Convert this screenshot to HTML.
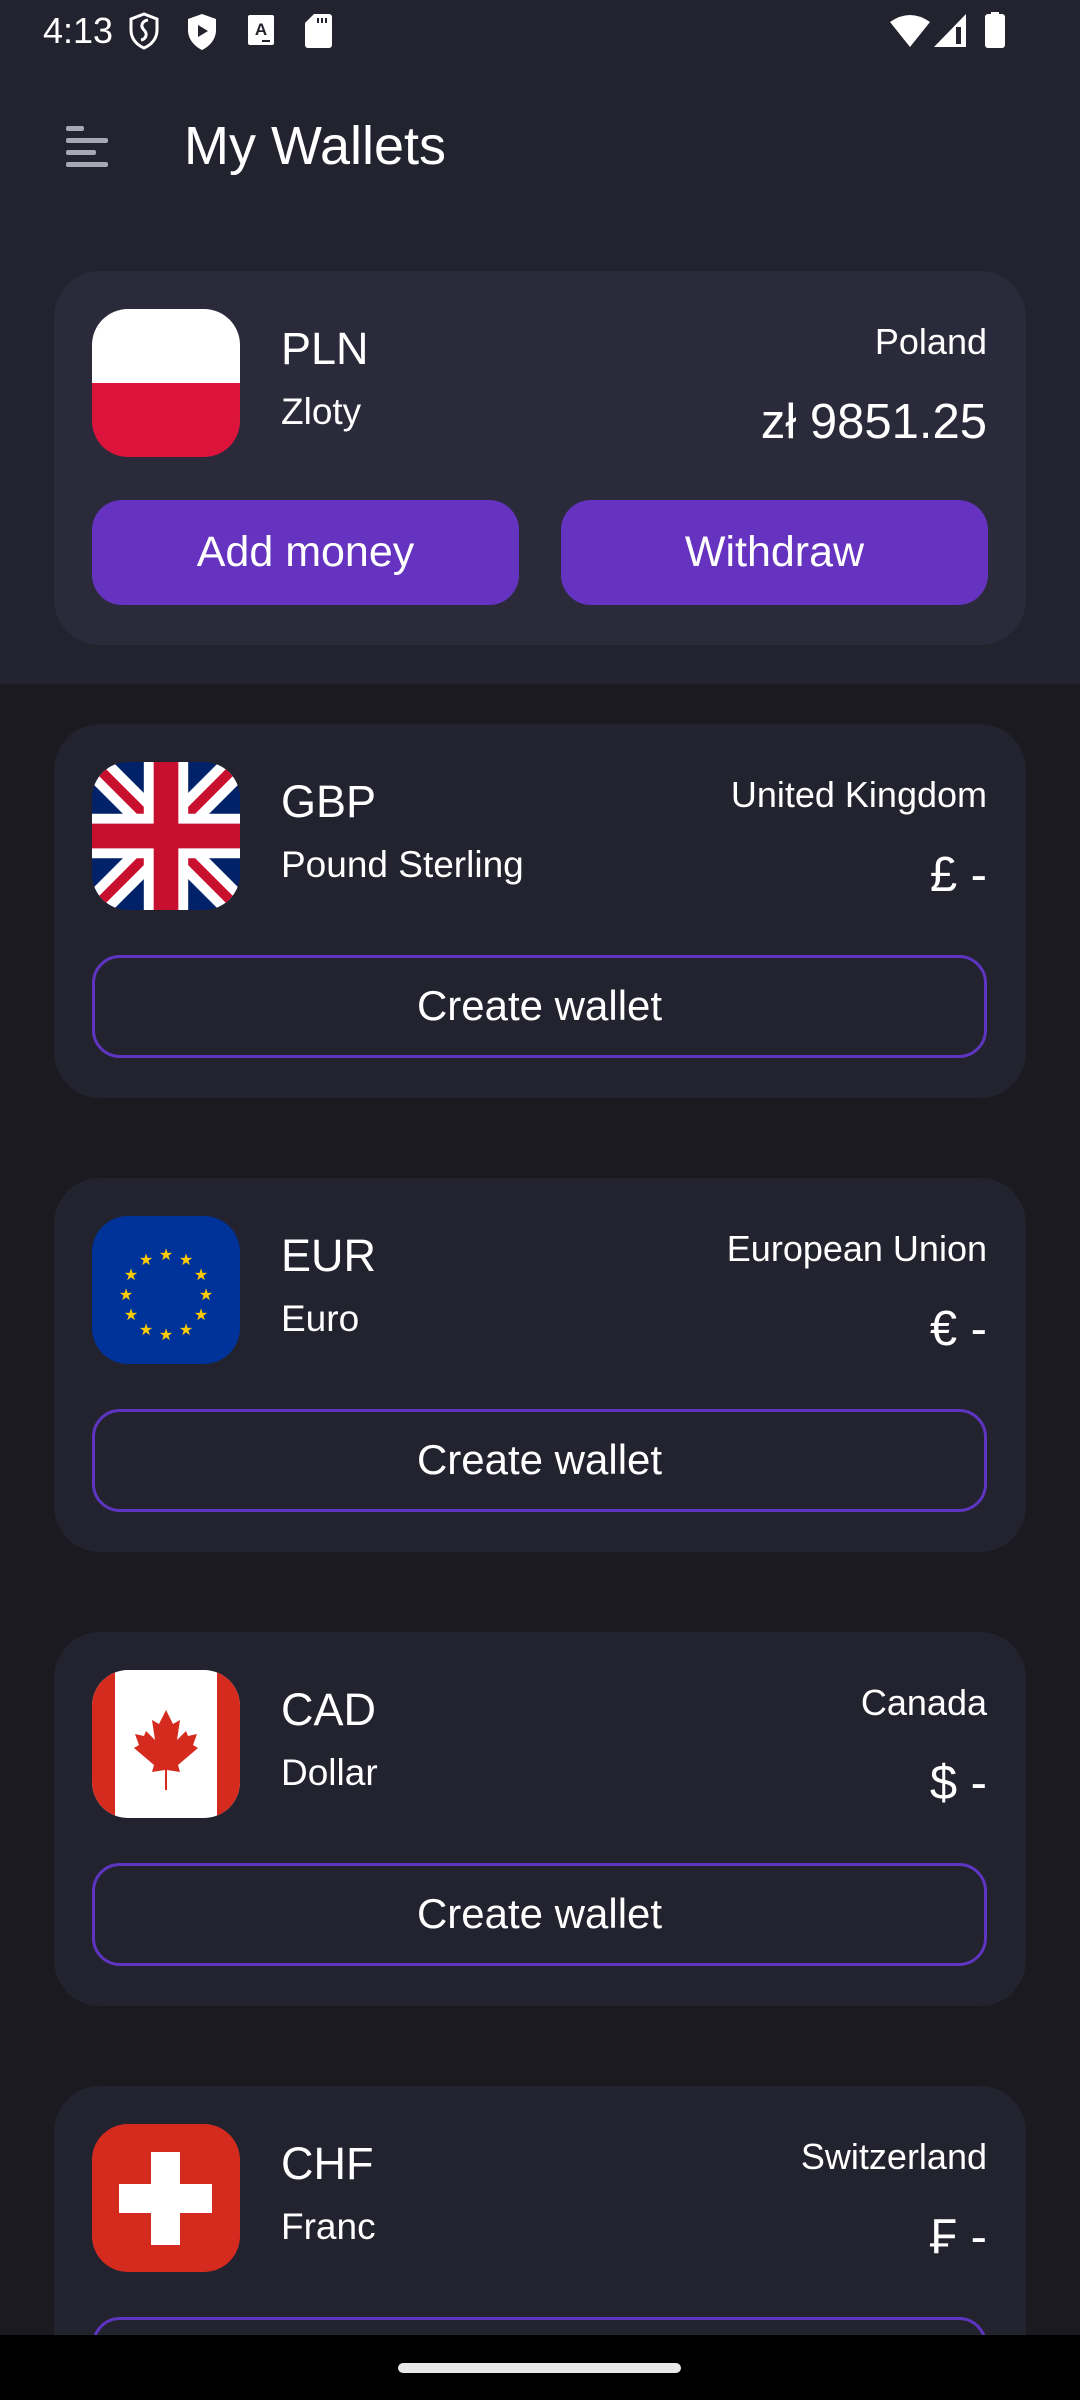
<!DOCTYPE html>
<html style="width:1080px;height:2400px;overflow:hidden"><head><meta charset="utf-8"><style>
*{margin:0;padding:0;box-sizing:border-box}
body{width:1080px;height:2400px;overflow:hidden;font-family:"Liberation Sans",sans-serif;color:#fff}
#w{position:relative;width:1080px;height:2400px;overflow:hidden;background:#1b1a21}
.abs{position:absolute}
.hdr{left:0;top:0;width:1080px;height:684px;background:#23232f}
.card{position:absolute;left:54px;width:972px;border-radius:46px;background:#23232f}
.flag{position:absolute;left:38px;top:38px;width:148px;height:148px;border-radius:36px;overflow:hidden}
.code{position:absolute;left:227px;top:52px;font-size:45px}
.name{position:absolute;left:227px;top:120px;font-size:37px}
.ctry{position:absolute;right:39px;top:50px;font-size:36px;text-align:right}
.amt{position:absolute;right:39px;top:123px;font-size:49px;text-align:right}
.ob{position:absolute;left:38px;top:231px;width:895px;height:103px;border:3px solid #5e35c0;border-radius:28px;font-size:42px;text-align:center;line-height:96px}
.btn{position:absolute;top:229px;height:105px;width:427px;border-radius:30px;background:#6633c1;font-size:43px;text-align:center;line-height:105px}
</style></head><body><div id="w">
<div class="abs hdr"></div>
<div class="abs" style="left:43px;top:10px;font-size:36px;color:#fff">4:13</div>
<svg class="abs" style="left:128px;top:12px" width="32" height="38" viewBox="0 0 32 38"><path d="M16 2L3 7v11c0 9 6 15 13 18 7-3 13-9 13-18V7z" fill="none" stroke="#fff" stroke-width="3"/><path d="M20 8c-6 1-8 6-4 10s2 9-3 10" fill="none" stroke="#fff" stroke-width="3"/></svg>
<svg class="abs" style="left:186px;top:13px" width="32" height="38" viewBox="0 0 32 38"><path d="M16 1L2 6v11c0 9 6 16 14 20 8-4 14-11 14-20V6z" fill="#fff"/><path d="M12 12l10 6-10 6z" fill="#23232f"/></svg>
<svg class="abs" style="left:248px;top:15px" width="26" height="30" viewBox="0 0 26 30"><rect x="0" y="0" width="26" height="30" rx="2" fill="#fff"/><text x="13" y="20" font-size="17" font-weight="bold" text-anchor="middle" fill="#23232f" font-family="Liberation Sans">A</text><rect x="14" y="25" width="8" height="2" fill="#23232f"/></svg>
<svg class="abs" style="left:305px;top:14px" width="27" height="34" viewBox="0 0 27 34"><path d="M9 0h15a3 3 0 0 1 3 3v28a3 3 0 0 1-3 3H3a3 3 0 0 1-3-3V9z" fill="#fff"/><rect x="12" y="4" width="2" height="5" fill="#23232f"/><rect x="16" y="4" width="2" height="5" fill="#23232f"/><rect x="20" y="4" width="2" height="5" fill="#23232f"/></svg>
<svg class="abs" style="left:890px;top:14px" width="40" height="34" viewBox="0 0 40 34"><path d="M0 8Q20-6 40 8L20 33z" fill="#fff"/></svg>
<svg class="abs" style="left:934px;top:14px" width="32" height="34" viewBox="0 0 32 34"><path d="M32 0V33H0z" fill="#fff"/><rect x="22" y="13" width="5" height="17" fill="#23232f"/></svg>
<div class="abs" style="left:985px;top:14px;width:20px;height:34px;background:#fff;border-radius:3px"></div>
<div class="abs" style="left:991px;top:12px;width:8px;height:4px;background:#fff"></div>
<div class="abs" style="left:66px;top:126px;width:18px;height:5px;background:#a6a9b4;border-radius:2px"></div>
<div class="abs" style="left:66px;top:138px;width:42px;height:5px;background:#a6a9b4;border-radius:2px"></div>
<div class="abs" style="left:66px;top:150px;width:30px;height:5px;background:#a6a9b4;border-radius:2px"></div>
<div class="abs" style="left:66px;top:162px;width:42px;height:5px;background:#a6a9b4;border-radius:2px"></div>
<div class="abs" style="left:184px;top:115px;font-size:54px">My Wallets</div>

<div class="card" style="top:271px;height:374px;background:#2b2a3b">
 <div class="flag"><div style="height:50%;background:#fff"></div><div style="height:50%;background:#dc143c"></div></div>
 <div class="code">PLN</div><div class="name">Zloty</div>
 <div class="ctry">Poland</div><div class="amt">zł 9851.25</div>
 <div class="btn" style="left:38px">Add money</div>
 <div class="btn" style="left:507px">Withdraw</div>
</div>

<div class="card" style="top:724px;height:374px">
 <div class="flag"><svg width="148" height="148" viewBox="0 0 60 60"><rect width="60" height="60" fill="#012169"/><path d="M0 0L60 60M60 0L0 60" stroke="#fff" stroke-width="12"/><path d="M0 0L30 30M60 60L30 30M60 0L30 30M0 60L30 30" stroke="#c8102e" stroke-width="4"/><path d="M30 0V60M0 30H60" stroke="#fff" stroke-width="18"/><path d="M30 0V60M0 30H60" stroke="#c8102e" stroke-width="10"/></svg></div>
 <div class="code">GBP</div><div class="name">Pound Sterling</div>
 <div class="ctry">United Kingdom</div><div class="amt">£ -</div>
 <div class="ob">Create wallet</div>
</div>

<div class="card" style="top:1178px;height:374px">
 <div class="flag" style="background:#003399"><svg width="148" height="148" viewBox="0 0 148 148"><g fill="#ffcc00" font-size="16" text-anchor="middle" font-family="DejaVu Sans">
 <text x="74" y="44">★</text><text x="94" y="49">★</text><text x="109" y="64">★</text><text x="114" y="84">★</text><text x="109" y="104">★</text><text x="94" y="119">★</text><text x="74" y="124">★</text><text x="54" y="119">★</text><text x="39" y="104">★</text><text x="34" y="84">★</text><text x="39" y="64">★</text><text x="54" y="49">★</text></g></svg></div>
 <div class="code">EUR</div><div class="name">Euro</div>
 <div class="ctry">European Union</div><div class="amt">€ -</div>
 <div class="ob">Create wallet</div>
</div>

<div class="card" style="top:1632px;height:374px">
 <div class="flag" style="background:#fff"><div class="abs" style="left:0;top:0;width:23px;height:148px;background:#d52b1e"></div><div class="abs" style="right:0;top:0;width:23px;height:148px;background:#d52b1e"></div>
 <svg class="abs" style="left:34px;top:40px" width="80" height="80" viewBox="0 0 80 80"><path d="M40 0l-7 14-7-4 3 20-9-9-2 5-9-2 4 11-5 3 20 17-2 7 13-2 v20h2v-20l13 2-2-7 20-17-5-3 4-11-9 2-2-5-9 9 3-20-7 4z" fill="#d52b1e"/></svg></div>
 <div class="code">CAD</div><div class="name">Dollar</div>
 <div class="ctry">Canada</div><div class="amt">$ -</div>
 <div class="ob">Create wallet</div>
</div>

<div class="card" style="top:2086px;height:374px">
 <div class="flag" style="background:#d52b1e"><div class="abs" style="left:59px;top:28px;width:29px;height:93px;background:#fff"></div><div class="abs" style="left:27px;top:60px;width:93px;height:29px;background:#fff"></div></div>
 <div class="code">CHF</div><div class="name">Franc</div>
 <div class="ctry">Switzerland</div><div class="amt">₣ -</div>
 <div class="ob">Create wallet</div>
</div>

<div class="abs" style="left:0;top:2335px;width:1080px;height:65px;background:#000"></div>
<div class="abs" style="left:398px;top:2363px;width:283px;height:10px;border-radius:5px;background:#e8e8e8"></div>
</div></body></html>
